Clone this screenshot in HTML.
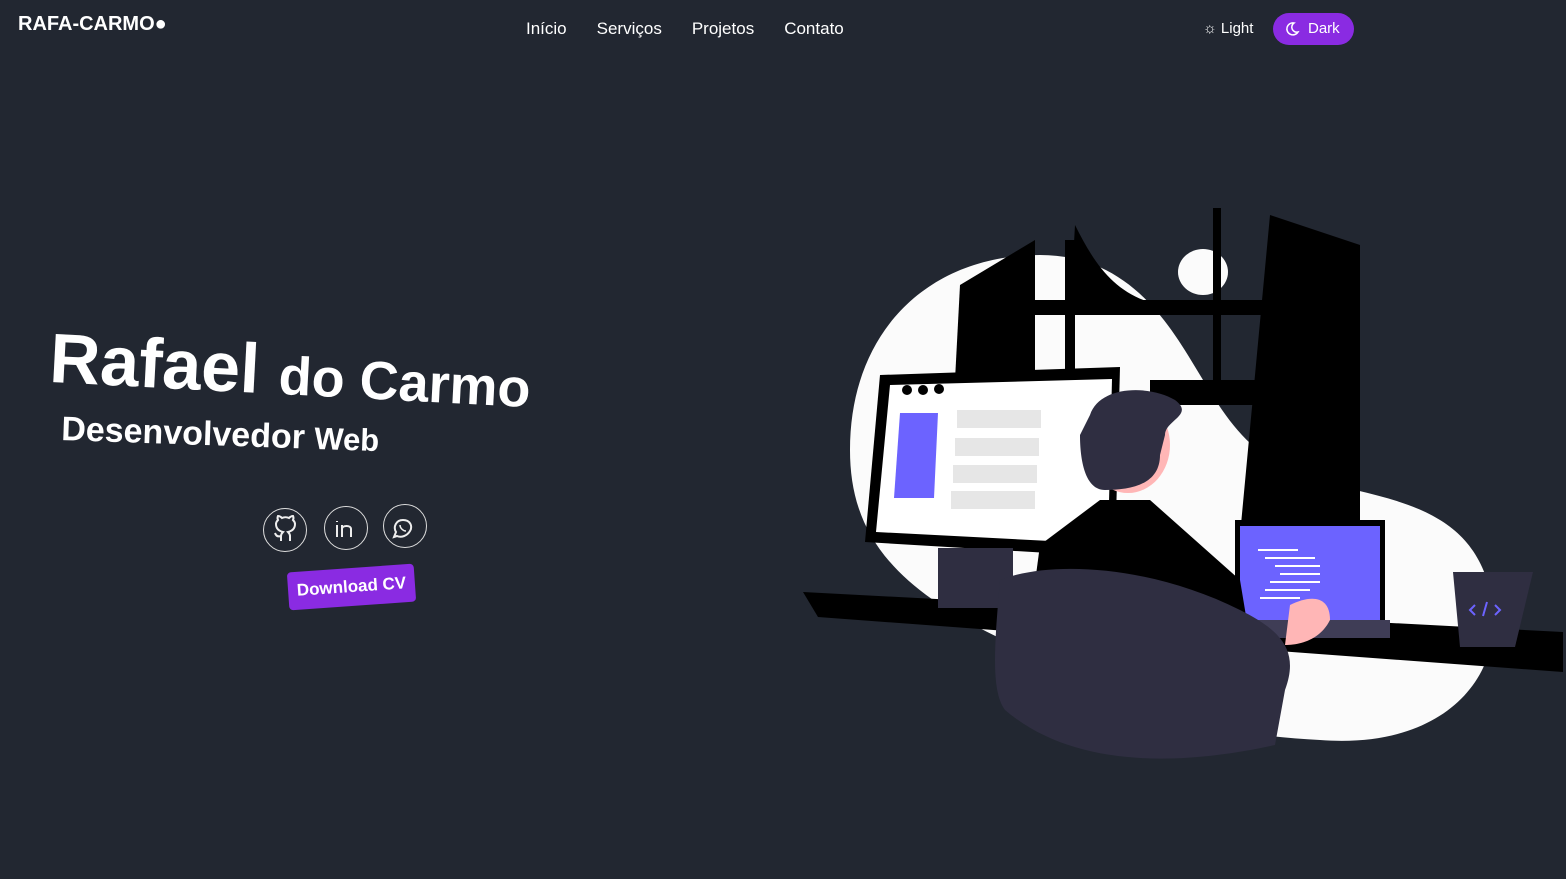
<!DOCTYPE html>
<html><head><meta charset="utf-8"><style>
*{margin:0;padding:0;box-sizing:border-box}
body{width:1566px;height:879px;background:#222731;overflow:hidden;position:relative;font-family:"Liberation Sans","DejaVu Sans",sans-serif;color:#fff}
.logo{position:absolute;left:18px;top:13px;font-size:20px;font-weight:bold;letter-spacing:0}
nav{position:absolute;top:19px;left:526px;font-size:17px}
nav span{margin-right:30px}
.light{position:absolute;left:1203px;top:20px;font-size:15px}
.dark{position:absolute;left:1273px;top:13px;width:81px;height:32px;border-radius:16px;background:#8a2be2;font-size:15px;line-height:32px;padding-left:35px}
.n1{position:absolute;left:52px;top:318px;font-weight:bold;font-size:70px;transform:rotate(3deg);transform-origin:left top;white-space:nowrap}
.n1 small{font-size:54px}
.n2{position:absolute;left:62px;top:410px;font-weight:bold;font-size:34px;transform:rotate(2deg);transform-origin:left top;white-space:nowrap}
.ic{position:absolute;width:44px;height:44px;border:1.5px solid #ddd;border-radius:50%}
.cv{position:absolute;left:288px;top:568px;width:127px;height:38px;background:#8a2be2;border-radius:4px;transform:rotate(-4deg);font-weight:bold;font-size:17px;text-align:center;line-height:38px}
</style></head><body>
<div class="logo">RAFA-CARMO●</div>
<nav><span>Início</span><span>Serviços</span><span>Projetos</span><span>Contato</span></nav>
<div class="light">☼ Light</div>
<div class="dark">Dark</div>
<svg style="position:absolute;left:1284px;top:21px" width="16" height="16" viewBox="0 0 16 16"><path d="M10 2a6 6 0 1 0 4 9 5 5 0 0 1-4-9z" fill="none" stroke="#fff" stroke-width="1.5"/></svg>
<div class="n1">Rafael <small>do Carmo</small></div>
<div class="n2">Desenvolvedor <span style="font-size:31px">Web</span></div>
<div class="ic" style="left:263px;top:508px"></div>
<div class="ic" style="left:324px;top:506px"></div>
<div class="ic" style="left:383px;top:504px"></div>
<svg style="position:absolute;left:263px;top:504px" width="170" height="50">
<g fill="none" stroke="#eee" stroke-width="2">
<path d="M18 37v-5c0-2 1-3 2-4-4-1-7-3-7-8 0-2 1-3 2-4-1-2 0-4 0-4s2 0 4 2c2-1 5-1 7 0 2-2 4-2 4-2s1 2 0 4c1 1 2 2 2 4 0 5-3 7-7 8 1 1 2 2 2 4v5M18 32c-3 1-5 0-6-3"/>
<path d="M74 17v1M74 21v12M79 33v-12M79 25c0-4 9-4 9 0v8"/>
<path d="M131 33l2-5c-3-5 0-12 7-12s10 6 7 11-9 7-13 5z"/>
<path d="M137 21c0 3 3 6 6 6" stroke-width="1.5"/>
</g></svg>
<div class="cv">Download CV</div>
<svg style="position:absolute;left:800px;top:200px" width="766" height="570" viewBox="800 200 766 570">
<path d="M850 450c0-120 80-195 190-195 90 0 130 70 160 120 30 50 50 80 110 105 90 20 160 30 180 110 20 80-40 160-170 150-90-5-180-20-270-80C900 600 850 540 850 450z" fill="#fbfbfb"/>
<ellipse cx="1203" cy="272" rx="25" ry="23" fill="#fbfbfb"/>
<g fill="#000">
<path d="M960 285l75-45v130l-80 10z"/><path d="M1075 225c20 40 40 70 85 80l-90 10z"/>
<rect x="1035" y="300" width="230" height="15"/><rect x="1065" y="240" width="10" height="140"/>
<rect x="1213" y="208" width="8" height="180"/>
<path d="M1270 215l90 30v290h-120z"/>
<rect x="1150" y="380" width="110" height="25"/>
<path d="M803 592l760 40v40l-745-55z"/>
</g>
<path d="M880 375l240-8-5 190-250-15z" fill="#000"/>
<path d="M890 385l222-6-4 165-232-12z" fill="#fff"/>
<path d="M900 413h38l-4 85h-40z" fill="#6c63ff"/>
<g fill="#e6e6e6"><rect x="957" y="410" width="84" height="18"/><rect x="955" y="438" width="84" height="18"/><rect x="953" y="465" width="84" height="18"/><rect x="951" y="491" width="84" height="18"/></g>
<g fill="#000"><circle cx="907" cy="390" r="5"/><circle cx="923" cy="390" r="5"/><circle cx="939" cy="389" r="5"/></g>
<rect x="938" y="548" width="75" height="60" fill="#2f2e41"/>
<path d="M1235 520h150v115h-150z" fill="#000"/><path d="M1240 526h140v95h-140z" fill="#6c63ff"/>
<g stroke="#fff" stroke-width="2"><path d="M1258 550h40M1265 558h50M1275 566h45M1280 574h40M1270 582h50M1265 590h45M1260 598h40"/></g>
<path d="M1240 620h150v18h-150z" fill="#3f3d56"/>
<path d="M1040 545l60-45h50l90 80 10 60-120 20-100-40z" fill="#000"/>
<path d="M1000 580c50-20 150-15 240 30 40 20 60 40 45 80l-10 55c-90 20-200 25-270-35-15-20-10-70-5-130z" fill="#2f2e41"/>
<path d="M1290 605c20-10 40-10 40 15-10 20-30 25-45 25z" fill="#ffb6b6"/>
<ellipse cx="1128" cy="445" rx="42" ry="48" fill="#ffb6b6"/>
<path d="M1090 415c10-30 60-30 85-15 20 15-10 20-10 35l-5 20c0 30-30 35-55 35-20 0-25-30-25-55z" fill="#2f2e41"/>
<path d="M1453 572h80l-18 75h-55z" fill="#2f2e41"/>
<path d="M1475 605l-5 5 5 5M1495 605l5 5-5 5M1487 602l-4 14" stroke="#6c63ff" stroke-width="2" fill="none"/>
</svg>
</body></html>
